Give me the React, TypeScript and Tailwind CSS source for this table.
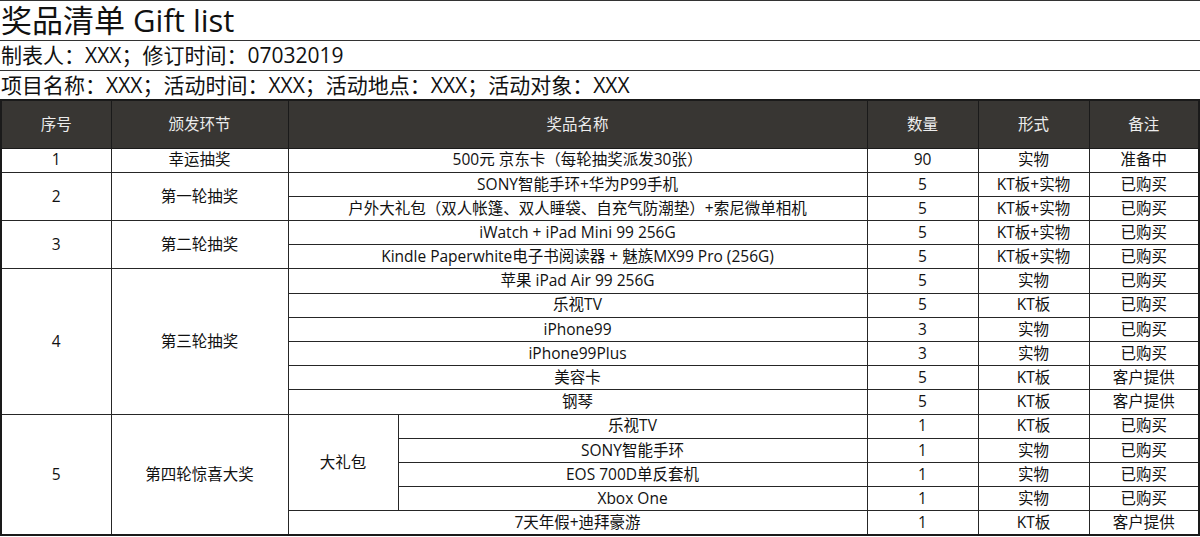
const font = "font-['Open_Sans','Noto_Sans_CJK_SC',sans-serif]"

type Item = { name: string; qty: string; kind: string; note: string }

const td = 'border border-[#262626] text-center align-middle p-0 h-[24.2px] leading-none'

const round2: Item[] = [
  { name: 'SONY智能手环+华为P99手机', qty: '5', kind: 'KT板+实物', note: '已购买' },
  { name: '户外大礼包（双人帐篷、双人睡袋、自充气防潮垫）+索尼微单相机', qty: '5', kind: 'KT板+实物', note: '已购买' },
]

const round3: Item[] = [
  { name: 'iWatch + iPad Mini 99 256G', qty: '5', kind: 'KT板+实物', note: '已购买' },
  { name: 'Kindle Paperwhite电子书阅读器 + 魅族MX99 Pro (256G)', qty: '5', kind: 'KT板+实物', note: '已购买' },
]

const round4: Item[] = [
  { name: '苹果 iPad Air 99 256G', qty: '5', kind: '实物', note: '已购买' },
  { name: '乐视TV', qty: '5', kind: 'KT板', note: '已购买' },
  { name: 'iPhone99', qty: '3', kind: '实物', note: '已购买' },
  { name: 'iPhone99Plus', qty: '3', kind: '实物', note: '已购买' },
  { name: '美容卡', qty: '5', kind: 'KT板', note: '客户提供' },
  { name: '钢琴', qty: '5', kind: 'KT板', note: '客户提供' },
]

const bigPack: Item[] = [
  { name: '乐视TV', qty: '1', kind: 'KT板', note: '已购买' },
  { name: 'SONY智能手环', qty: '1', kind: '实物', note: '已购买' },
  { name: 'EOS 700D单反套机', qty: '1', kind: '实物', note: '已购买' },
  { name: 'Xbox One', qty: '1', kind: '实物', note: '已购买' },
]

function Tail({ item }: { item: Item }) {
  return (
    <>
      <td className={td}>{item.qty}</td>
      <td className={td}>{item.kind}</td>
      <td className={td}>{item.note}</td>
    </>
  )
}

function Round({ no, title, items }: { no: string; title: string; items: Item[] }) {
  return (
    <>
      {items.map((item, i) => (
        <tr key={i}>
          {i === 0 && (
            <>
              <td className={td} rowSpan={items.length}>{no}</td>
              <td className={td} rowSpan={items.length}>{title}</td>
            </>
          )}
          <td className={td} colSpan={2}>{item.name}</td>
          <Tail item={item} />
        </tr>
      ))}
    </>
  )
}

export default function App() {
  return (
    <div className={`${font} w-[1200px] h-[537px] bg-white text-[#111] overflow-hidden`}>
      <div className="h-[41px] border-t border-b border-[#333] flex items-center pl-[1px] text-[31px] leading-none">
        奖品清单 Gift list
      </div>
      <div className="h-[30px] border-b border-[#333] flex items-center pl-[1px] text-[21px] leading-none">
        制表人：XXX；修订时间：07032019
      </div>
      <div className="h-[28px] flex items-center pl-[1px] text-[21px] leading-none">
        项目名称：XXX；活动时间：XXX；活动地点：XXX；活动对象：XXX
      </div>
      <table className="w-[1199px] table-fixed border-collapse text-[15.5px] border-2 border-[#1a1a1a]">
        <colgroup>
          <col className="w-[110px]" />
          <col className="w-[177px]" />
          <col className="w-[110px]" />
          <col className="w-[469px]" />
          <col className="w-[111px]" />
          <col className="w-[111px]" />
          <col className="w-[110px]" />
        </colgroup>
        <thead>
          <tr className="bg-[#383633] text-[#ececec]">
            <th className="border border-[#1a1a1a] font-normal h-[48px]">序号</th>
            <th className="border border-[#1a1a1a] font-normal">颁发环节</th>
            <th className="border border-[#1a1a1a] font-normal" colSpan={2}>奖品名称</th>
            <th className="border border-[#1a1a1a] font-normal">数量</th>
            <th className="border border-[#1a1a1a] font-normal">形式</th>
            <th className="border border-[#1a1a1a] font-normal">备注</th>
          </tr>
        </thead>
        <tbody>
          <Round no="1" title="幸运抽奖" items={[{ name: '500元 京东卡（每轮抽奖派发30张）', qty: '90', kind: '实物', note: '准备中' }]} />
          <Round no="2" title="第一轮抽奖" items={round2} />
          <Round no="3" title="第二轮抽奖" items={round3} />
          <Round no="4" title="第三轮抽奖" items={round4} />
          {bigPack.map((item, i) => (
            <tr key={i}>
              {i === 0 && (
                <>
                  <td className={td} rowSpan={5}>5</td>
                  <td className={td} rowSpan={5}>第四轮惊喜大奖</td>
                  <td className={td} rowSpan={4}>大礼包</td>
                </>
              )}
              <td className={td}>{item.name}</td>
              <Tail item={item} />
            </tr>
          ))}
          <tr>
            <td className={td} colSpan={2}>7天年假+迪拜豪游</td>
            <Tail item={{ name: '', qty: '1', kind: 'KT板', note: '客户提供' }} />
          </tr>
        </tbody>
      </table>
    </div>
  )
}
